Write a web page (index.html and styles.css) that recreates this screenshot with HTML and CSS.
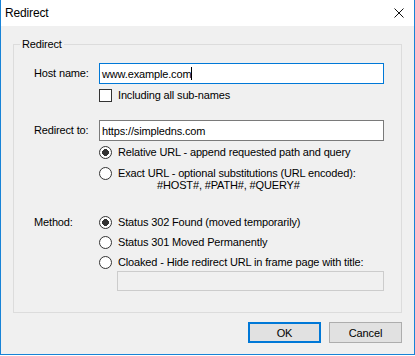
FILE: index.html
```html
<!DOCTYPE html>
<html lang="en">
<head>
  <meta charset="UTF-8">
  <title>Redirect</title>
  <link rel="stylesheet" href="styles.css">
</head>
<body>
  <div class="window">
    <div class="titlebar">
      <span class="title">Redirect</span>
      <button class="close-btn" title="Close">
        <svg width="10" height="10" viewBox="0 0 10 10"><path d="M0.5 0.5L9.5 9.5M9.5 0.5L0.5 9.5" stroke="#111" stroke-width="1"/></svg>
      </button>
    </div>

    <div class="content">
      <fieldset class="group">
        <legend>Redirect</legend>
        <div class="group-body">
          <!-- Host -->
          <div class="row">
            <span class="field-label">Host name:</span>
            <div class="textbox focused">www.example.com<span class="caret"></span></div>
          </div>
          <div class="option check-row">
            <span class="checkbox"></span>
            <span class="opt-text">Including all sub-names</span>
          </div>

          <!-- Redirect to -->
          <div class="row redirect-row">
            <span class="field-label">Redirect to:</span>
            <div class="textbox">https://simpledns.com</div>
          </div>
          <div class="option radio-rel">
            <span class="radio checked"></span>
            <span class="opt-text">Relative URL - append requested path and query</span>
          </div>
          <div class="option radio-exact">
            <span class="radio"></span>
            <span class="opt-text two-line">Exact URL - optional substitutions (URL encoded):<br><span class="subst">#HOST#, #PATH#, #QUERY#</span></span>
          </div>

          <!-- Method -->
          <div class="method-row">
            <span class="field-label">Method:</span>
            <div class="method-opts">
              <div class="option-inline">
                <span class="radio checked"></span>
                <span class="opt-text">Status 302 Found (moved temporarily)</span>
              </div>
              <div class="option-inline">
                <span class="radio"></span>
                <span class="opt-text">Status 301 Moved Permanently</span>
              </div>
              <div class="option-inline">
                <span class="radio"></span>
                <span class="opt-text">Cloaked - Hide redirect URL in frame page with title:</span>
              </div>
              <div class="textbox disabled"></div>
            </div>
          </div>
        </div>
      </fieldset>

      <div class="buttons">
        <button class="btn default">OK</button>
        <button class="btn">Cancel</button>
      </div>
    </div>
  </div>
</body>
</html>
```

FILE: styles.css
```css
body {
  margin: 0;
  background: #fff;
  font-family: "Liberation Sans", Arial, sans-serif;
  font-size: 11px;
  letter-spacing: -0.15px;
  color: #000;
}
.window {
  width: 415px;
  height: 355px;
  box-sizing: border-box;
  border: 1px solid #1883d7;
  border-top: none;
  display: flex;
  flex-direction: column;
  background: #f0f0f0;
}
.titlebar {
  height: 26px;
  flex: none;
  background: #fff;
  display: flex;
  align-items: center;
  justify-content: space-between;
  padding-left: 4px;
}
.title {
  font-size: 12px;
}
.close-btn {
  width: 30px;
  height: 26px;
  border: none;
  background: transparent;
  padding: 0;
  display: flex;
  align-items: center;
  justify-content: center;
}
.content {
  flex: 1;
}
/* Group box */
.group {
  margin: 11px 12px 0 12px;
  padding: 0;
  border: 1px solid #dcdcdc;
  min-width: 0;
}
.group legend {
  margin-left: 6px;
  padding: 0 2px;
  line-height: 14px;
}
.group-body {
  padding: 12px 17px 21px 20px;
}
.row {
  display: flex;
  align-items: center;
}
.field-label {
  width: 65px;
  flex: none;
  line-height: 13px;
}
.textbox {
  flex: 1;
  height: 21px;
  box-sizing: border-box;
  border: 1px solid #7a7a7a;
  background: #fff;
  padding: 0 2px;
  display: flex;
  align-items: center;
  white-space: nowrap;
}
.textbox.focused {
  border-color: #0078d7;
}
.textbox.disabled {
  flex: none;
  height: 20px;
  margin: 2px 0 0 18px;
  border-color: #cccccc;
  background: #f0f0f0;
}
.caret {
  display: inline-block;
  width: 1px;
  height: 13px;
  background: #000;
}
/* Checkbox and radio options */
.option {
  display: flex;
  align-items: flex-start;
  margin-left: 65px;
  line-height: 13px;
}
.option-inline {
  display: flex;
  align-items: flex-start;
  line-height: 13px;
}
.opt-text {
  margin-left: 6px;
  white-space: nowrap;
}
.checkbox {
  width: 13px;
  height: 13px;
  box-sizing: border-box;
  border: 1px solid #333;
  background: #fff;
  flex: none;
}
.radio {
  width: 13px;
  height: 13px;
  box-sizing: border-box;
  border: 1px solid #333;
  border-radius: 50%;
  background: #fff;
  flex: none;
}
.radio.checked {
  background: radial-gradient(circle, #333 0 3.2px, #fff 3.6px);
}
.check-row { margin-top: 5px; }
.redirect-row { margin-top: 18px; }
.radio-rel { margin-top: 5px; }
.radio-exact { margin-top: 8px; }
.two-line {
  line-height: 12px;
}
.subst {
  padding-left: 39px;
}
.method-row {
  display: flex;
  align-items: flex-start;
  margin-top: 25px;
}
.method-opts {
  display: flex;
  flex-direction: column;
  gap: 7px;
  flex: 1;
}
.method-opts .textbox.disabled {
  margin-top: -5px;
  margin-right: 0;
}
/* Bottom buttons */
.buttons {
  display: flex;
  justify-content: flex-end;
  gap: 8px;
  margin: 9px 12px 0 0;
}
.btn {
  width: 73px;
  height: 21px;
  box-sizing: border-box;
  border: 1px solid #adadad;
  background: #e1e1e1;
  font-family: inherit;
  font-size: 11px;
  letter-spacing: inherit;
  color: #000;
  padding: 0;
}
.btn.default {
  border: 2px solid #0078d7;
}
```
